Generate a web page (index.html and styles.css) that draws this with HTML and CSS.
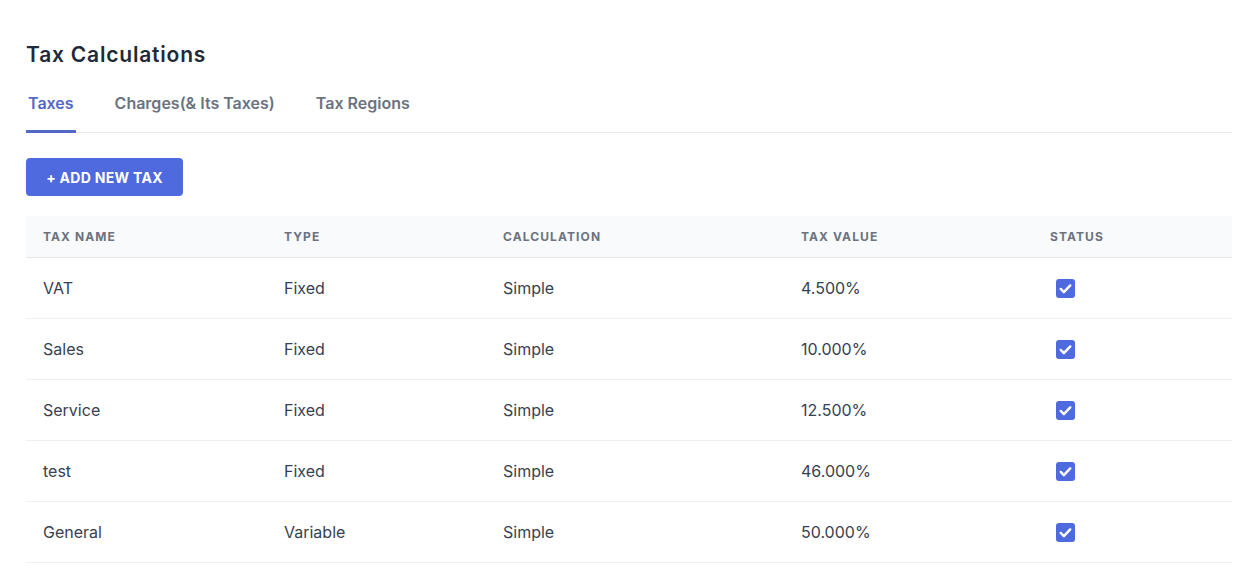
FILE: index.html
```html
<!DOCTYPE html>
<html>

<head>
    <meta charset="utf-8">
    <title>Tax Calculations</title>
    <meta name="viewport" content="width=device-width, initial-scale=1">
    <link rel="stylesheet" href="styles.css">
</head>

<body>
    <div class="page">
        <h2 class="page-title">Tax Calculations</h2>

        <ul class="tabs">
            <li class="tab active">Taxes</li>
            <li class="tab">Charges(&amp; Its Taxes)</li>
            <li class="tab">Tax Regions</li>
        </ul>

        <button class="btn-add">+ ADD NEW TAX</button>

        <table class="tax-table">
            <colgroup>
                <col class="col-name">
                <col class="col-type">
                <col class="col-calc">
                <col class="col-value">
                <col class="col-status">
            </colgroup>
            <thead>
                <tr>
                    <th>Tax Name</th>
                    <th>Type</th>
                    <th>Calculation</th>
                    <th>Tax Value</th>
                    <th>Status</th>
                </tr>
            </thead>
            <tbody>
                <tr>
                    <td>VAT</td>
                    <td>Fixed</td>
                    <td>Simple</td>
                    <td>4.500%</td>
                    <td><span class="check"><svg viewBox="0 0 20 20"><path d="M5 10.5l3.3 3.3L15 6.8"/></svg></span></td>
                </tr>
                <tr>
                    <td>Sales</td>
                    <td>Fixed</td>
                    <td>Simple</td>
                    <td>10.000%</td>
                    <td><span class="check"><svg viewBox="0 0 20 20"><path d="M5 10.5l3.3 3.3L15 6.8"/></svg></span></td>
                </tr>
                <tr>
                    <td>Service</td>
                    <td>Fixed</td>
                    <td>Simple</td>
                    <td>12.500%</td>
                    <td><span class="check"><svg viewBox="0 0 20 20"><path d="M5 10.5l3.3 3.3L15 6.8"/></svg></span></td>
                </tr>
                <tr>
                    <td>test</td>
                    <td>Fixed</td>
                    <td>Simple</td>
                    <td>46.000%</td>
                    <td><span class="check"><svg viewBox="0 0 20 20"><path d="M5 10.5l3.3 3.3L15 6.8"/></svg></span></td>
                </tr>
                <tr>
                    <td>General</td>
                    <td>Variable</td>
                    <td>Simple</td>
                    <td>50.000%</td>
                    <td><span class="check"><svg viewBox="0 0 20 20"><path d="M5 10.5l3.3 3.3L15 6.8"/></svg></span></td>
                </tr>
            </tbody>
        </table>
    </div>
</body>

</html>
```

FILE: styles.css
```css
body {
    margin: 0;
    background: #ffffff;
    font-family: Inter, "Noto Sans", sans-serif;
    color: #374151;
}

.page {
    padding: 40px 24px 0 26px;
}

.page-title {
    margin: 0;
    font-size: 21px;
    font-weight: 600;
    color: #1f2937;
    line-height: 30px;
    letter-spacing: 0.8px;
}

/* tabs */
.tabs {
    display: flex;
    list-style: none;
    margin: 20px 0 0 0;
    padding: 0;
    border-bottom: 1px solid #e5e7eb;
}

.tab {
    font-size: 16px;
    font-weight: 600;
    color: #6b7280;
    padding: 3px 2px 17px 2px;
    margin-right: 37px;
    border-bottom: 3px solid transparent;
    margin-bottom: -1px;
}

.tab.active {
    color: #5468c7;
    border-bottom-color: #5468c7;
}

/* add button */
.btn-add {
    display: block;
    margin-top: 25px;
    height: 38px;
    width: 157px;
    border: none;
    border-radius: 4px;
    background: #4f6ade;
    color: #ffffff;
    font-family: Inter, sans-serif;
    font-size: 14px;
    font-weight: 700;
    letter-spacing: 0.3px;
}

/* table */
.tax-table {
    margin-top: 20px;
    width: 100%;
    border-collapse: collapse;
    table-layout: fixed;
}

.tax-table th,
.tax-table td {
    box-sizing: border-box;
    padding: 0 0 0 17px;
    text-align: left;
}

.tax-table th {
    background: #f9fafb;
    height: 41px;
    font-size: 12px;
    font-weight: 700;
    color: #6b7280;
    letter-spacing: 1.1px;
    text-transform: uppercase;
    border-bottom: 1px solid #e5e7eb;
}

.tax-table td {
    height: 61px;
    font-size: 16px;
    color: #374151;
    border-bottom: 1px solid #eeeff1;
}

.col-name { width: 241px; }
.col-type { width: 219px; }
.col-calc { width: 298px; }
.col-value { width: 249px; }

.check {
    display: inline-block;
    width: 19px;
    height: 19px;
    margin-left: 6px;
    border-radius: 3px;
    background: #4f6ade;
    vertical-align: middle;
}

.check svg {
    width: 19px;
    height: 19px;
    display: block;
}

.check path {
    fill: none;
    stroke: #ffffff;
    stroke-width: 2.6;
    stroke-linecap: round;
    stroke-linejoin: round;
}
```
